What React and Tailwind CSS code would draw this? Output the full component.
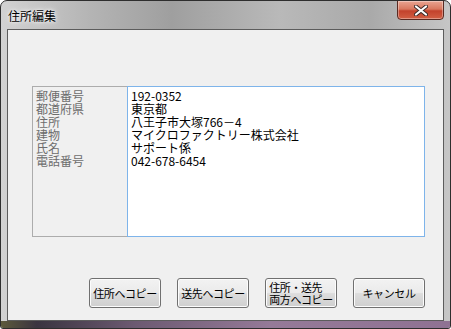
import React from 'react';

const labels = ['郵便番号', '都道府県', '住所', '建物', '氏名', '電話番号'];
const values = ['192-0352', '東京都', '八王子市大塚766－4', 'マイクロファクトリー株式会社', 'サポート係', '042-678-6454'];

const font = { fontFamily: '"Noto Sans CJK JP", "MS UI Gothic", sans-serif' };

const WinButton = ({ children }) => (
    <button
        className="w-[72px] h-[30px] p-0 rounded-[3px] border border-[#707070] bg-[linear-gradient(#f2f2f2_0%,#ebebeb_48%,#dddddd_52%,#cfcfcf_100%)] shadow-[inset_0_0_0_1px_#fcfcfc] text-[11px] leading-[12px] tracking-[-0.4px] whitespace-nowrap text-black flex items-center justify-center"
        style={font}
    >
        {children}
    </button>
);

const App = () => {
    return (
        <div className="w-[451px] h-[329px] bg-white">
            <div className="w-[451px] h-[329px] flex flex-col rounded-t-[7px] rounded-b-[3px] border border-[#2e2e2e] overflow-hidden bg-[linear-gradient(to_right,#d2d2d2_0%,#b4b4b4_20%,#9f9f9f_38%,#b9b9b9_62%,#a9a9a9_82%,#c6c6c6_100%)]">
                {/* title bar */}
                <div className="h-[28px] flex items-start justify-between pl-[7px] pr-[6px]">
                    <span
                        className="text-[12px] leading-[14px] mt-[8px] text-black [text-shadow:0_0_6px_#ffffff,0_0_3px_#ffffff]"
                        style={font}
                    >
                        住所編集
                    </span>
                    <div className="w-[47px] h-[20px] -mt-px rounded-b-[4px] border border-[#5a2a22] bg-[linear-gradient(#e9a592_0%,#d9785f_45%,#c3422c_55%,#d25f44_100%)] shadow-[inset_0_0_0_1px_rgba(255,255,255,0.35)] flex items-center justify-center">
                        <svg width="14" height="11" viewBox="0 0 14 11">
                            <path d="M2 1.5 L12 9.5 M12 1.5 L2 9.5" stroke="#3b2a28" strokeWidth="4" strokeLinecap="round" />
                            <path d="M2 1.5 L12 9.5 M12 1.5 L2 9.5" stroke="#ffffff" strokeWidth="2.2" strokeLinecap="round" />
                        </svg>
                    </div>
                </div>
                {/* body */}
                <div className="flex-1 flex px-[6px]">
                    <div className="flex-1 border border-[#5c5c5c] bg-[#f0f0f0] flex flex-col pt-[56px] pl-[24px] pr-[18px]">
                        <div className="flex h-[151px]">
                            <div className="w-[95px] border border-[#acacac] border-r-0 bg-[#f0f0f0] pt-[2px] pl-[3px]">
                                {labels.map((l) => (
                                    <div key={l} className="text-[12px] leading-[13px] text-[#6d6d6d]" style={font}>{l}</div>
                                ))}
                            </div>
                            <div className="flex-1 border border-[#7eb4ea] bg-white pt-[2px] pl-[3px]">
                                {values.map((v) => (
                                    <div key={v} className="text-[12px] leading-[13px] text-black" style={font}>{v}</div>
                                ))}
                            </div>
                        </div>
                        <div className="flex justify-end gap-[16px] mt-[41px]">
                            <WinButton>住所へコピー</WinButton>
                            <WinButton>送先へコピー</WinButton>
                            <WinButton>
                                <span className="text-left">住所・送先<br />両方へコピー</span>
                            </WinButton>
                            <WinButton>キャンセル</WinButton>
                        </div>
                    </div>
                </div>
                {/* bottom frame */}
                <div className="h-[7px] bg-[linear-gradient(to_right,#5d5a3c_0%,#3a3440_8%,#6d5a72_30%,#957a98_60%,#8f7293_100%)]" />
            </div>
        </div>
    );
};

export default App;
